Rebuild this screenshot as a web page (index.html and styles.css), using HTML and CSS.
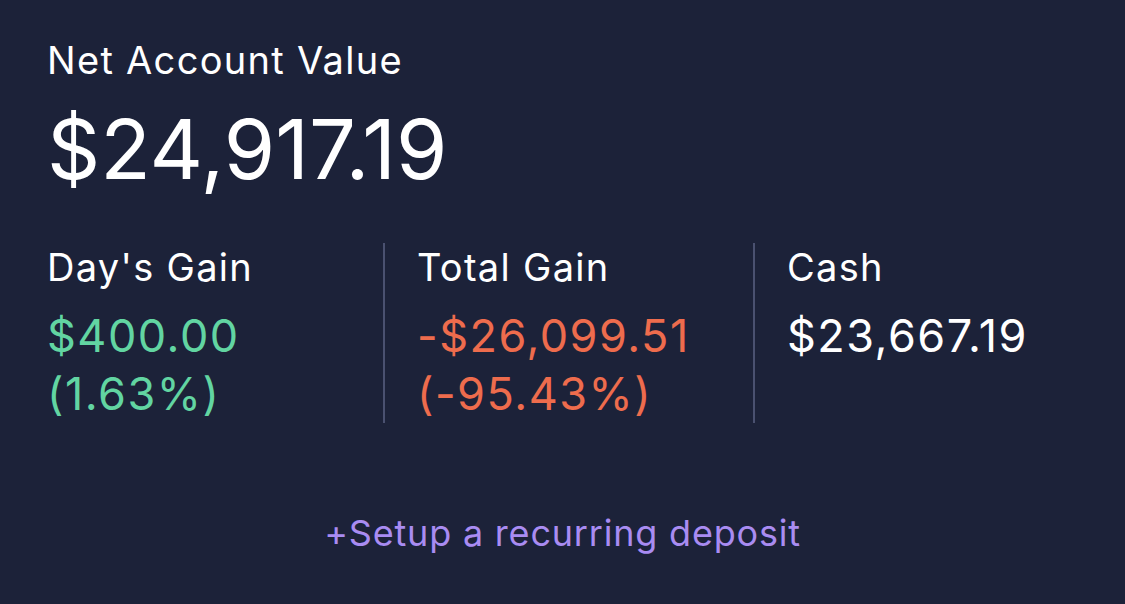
FILE: index.html
```html
<!DOCTYPE html>
<html lang="en">
<head>
    <meta charset="UTF-8">
    <meta name="viewport" content="width=device-width, initial-scale=1.0">
    <title>Net Account Value</title>
    <link rel="stylesheet" href="styles.css">
</head>
<body>
    <div class="summary">
        <div class="label">Net Account Value</div>
        <div class="total">$24,917.19</div>

        <!-- Ganancias y efectivo -->
        <div class="stats">
            <div class="stat">
                <div class="stat-label">Day's Gain</div>
                <div class="stat-value up">$400.00<br>(1.63%)</div>
            </div>
            <div class="stat">
                <div class="stat-label">Total Gain</div>
                <div class="stat-value down">-$26,099.51<br>(-95.43%)</div>
            </div>
            <div class="stat">
                <div class="stat-label">Cash</div>
                <div class="stat-value">$23,667.19</div>
            </div>
        </div>

        <a class="deposit" href="javascript:void(0)">+Setup a recurring deposit</a>
    </div>
</body>
</html>
```

FILE: styles.css
```css
/* Estilos generales */
body {
    font-family: Inter, "Noto Sans", sans-serif;
    margin: 0;
    padding: 0;
    background-color: #1c2239;
    color: #ffffff;
}

.summary {
    padding: 36px 0 0 47px;
}

.label {
    font-size: 38px;
    line-height: 48px;
    letter-spacing: 1.3px;
}

.total {
    font-size: 83px;
    line-height: 96px;
    margin-top: 17px;
}

/* Columnas */
.stats {
    display: flex;
    margin-top: 46px;
}

.stat {
    box-sizing: border-box;
    flex-shrink: 0;
    width: 338px;
    height: 180px;
    margin-right: 32px;
    border-right: 2px solid #4a5170;
}

.stat:last-child {
    border-right: none;
}

.stat-label {
    font-size: 38px;
    line-height: 48px;
    letter-spacing: 1.3px;
}

.stat-value {
    font-size: 45px;
    line-height: 58px;
    letter-spacing: 1.5px;
    margin-top: 16px;
}

.up {
    color: #62d5a2;
}

.down {
    color: #ee6c4d;
}

.deposit {
    display: block;
    text-align: center;
    margin: 86px 0 0 -47px;
    font-size: 36px;
    line-height: 48px;
    letter-spacing: 0.8px;
    color: #a98cf2;
    text-decoration: none;
}
```
